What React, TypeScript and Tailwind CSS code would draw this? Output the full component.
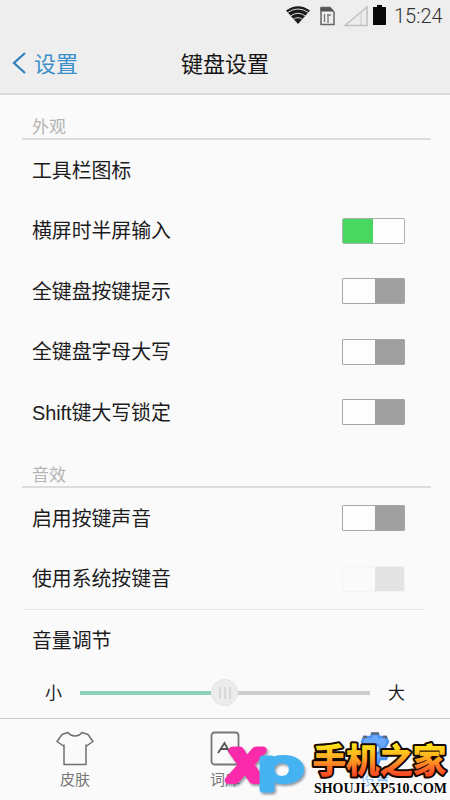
import React from "react";

const cjk = "font-['Liberation_Sans','Noto_Sans_CJK_SC',sans-serif]";

function Toggle({ state }: { state: "on" | "off" | "disabled" }) {
  if (state === "on") {
    return (
      <div className="flex h-[26px] w-[63px] rounded-[2px] border border-[#a9b3ab] bg-[#fdfdfd]">
        <div className="h-full w-[30px] bg-[#48d85f]" />
      </div>
    );
  }
  if (state === "off") {
    return (
      <div className="flex h-[26px] w-[63px] justify-end rounded-[1px] border border-[#a6a6a6] bg-[#fdfdfd]">
        <div className="h-full w-[29px] bg-[#a0a0a0]" />
      </div>
    );
  }
  return (
    <div className="flex h-[26px] w-[63px] justify-end border border-[#f3f3f3] bg-[#fafafa]">
      <div className="h-full w-[29px] bg-[#e4e4e4]" />
    </div>
  );
}

function Row({ label, state }: { label: string; state?: "on" | "off" | "disabled" }) {
  return (
    <div className="flex h-[60.5px] items-center justify-between pr-[45px] pl-8">
      <span className="pt-[3px] text-[19.9px] leading-none tracking-[-0.05px] text-[#1c1c1c]">{label}</span>
      {state && <Toggle state={state} />}
    </div>
  );
}

function Section({ label }: { label: string }) {
  return (
    <div className="ml-[22px] mr-[19px] flex items-end border-b-2 border-[#dcdcdc] pl-[10px] pb-px">
      <span className="text-[17px] leading-[18px] text-[#b4b4b4]">{label}</span>
    </div>
  );
}

function StatusBar() {
  return (
    <div className="flex h-8 justify-end pr-[7px]">
      <svg width="105" height="32" viewBox="285 0 105 32">
        <path d="M286 10.500Q298 2 310 10.500L298 24Z" fill="#1b1b1b" />
        <path d="M287.500 12.500Q298 5.500 308.500 12.500M290.500 16Q298 10.500 305.500 16M293.500 19.300Q298 16 302.500 19.300" fill="none" stroke="#eee" strokeWidth="0.900" />
        <path d="M321 7.500H330L334 12V24.500H321Z" fill="#eee" stroke="#666" strokeWidth="1.500" />
        <path d="M321 8H330L333 11H321Z" fill="#555" stroke="#555" />
        <path d="M324.500 14V22M327 15H331M328 15V23" fill="none" stroke="#777" strokeWidth="1.300" />
        <path d="M345 25.500L367 7V25.500Z" fill="#ececec" stroke="#c0c0c0" strokeWidth="1.500" />
        <path d="M361 12V25" stroke="#cacaca" />
        <path d="M377 5H382V7H386V25H373V7H377Z" fill="#080808" />
      </svg>
      <span className="ml-[4px] w-[49px] pt-[6px] font-['Roboto',sans-serif] text-[20px] leading-5 font-light text-[#333]">15:24</span>
    </div>
  );
}

function Watermark() {
  return (
    <svg className="absolute top-0 left-0 h-[82px] w-[450px]" viewBox="0 718 450 82">
      <defs>
        <linearGradient id="fire" x1="0" y1="0" x2="0" y2="1">
          <stop offset="0.15" stopColor="#fff21a" />
          <stop offset="0.48" stopColor="#ffac20" />
          <stop offset="0.72" stopColor="#ff6528" />
          <stop offset="0.95" stopColor="#f0301a" />
        </linearGradient>
        <filter id="shade" x="-20%" y="-20%" width="150%" height="150%">
          <feDropShadow dx="1.500" dy="2" stdDeviation="1.200" floodColor="#456" floodOpacity="0.6" />
        </filter>
      </defs>
      <g filter="url(#shade)" fontFamily="Liberation Sans, sans-serif">
        <text transform="translate(228.500 779) skewX(-6)" fontSize="56" textLength="32" lengthAdjust="spacingAndGlyphs" fill="#fb2caa" stroke="#fb2caa" strokeWidth="8" strokeLinejoin="round">x</text>
        <text transform="translate(257 780) scale(1 .8)" fontSize="54" textLength="47" lengthAdjust="spacingAndGlyphs" fill="#45b3f2" stroke="#45b3f2" strokeWidth="6" strokeLinejoin="round" fontFamily="DejaVu Sans, sans-serif">p</text>
      </g>
      <text x="312.500" y="772" fontFamily="Noto Sans CJK SC, sans-serif" fontSize="34" fontWeight="900" textLength="134" fill="url(#fire)" stroke="#140800" strokeWidth="4" strokeLinejoin="round" paintOrder="stroke">手机之家</text>
      <text x="314" y="792" fontFamily="Liberation Serif, serif" fontSize="14" fontWeight="700" textLength="133" lengthAdjust="spacingAndGlyphs" fill="#080808" stroke="#fff" strokeWidth="2" paintOrder="stroke">SHOUJLXP510.COM</text>
    </svg>
  );
}

function TabBar() {
  return (
    <nav className="relative h-[82px] border-t border-[#cfcfcf] bg-[#fafafa]">
      <div className="grid h-full grid-cols-3 text-[15px] leading-none text-[#777]">
        <div className="flex flex-col items-center pt-[12px]">
          <svg width="38" height="36" viewBox="0 0 38 36" fill="none" stroke="#707070" strokeWidth="1.500" strokeLinejoin="round">
            <path d="M12 1.500C15 6 23 6 26 1.500L32 3.500L37 10.500L30.500 15L30 14V33.500H8V14L7.500 15L1 10.500L6 3.500Z" />
          </svg>
          <span className="mt-[5px]">皮肤</span>
        </div>
        <div className="flex flex-col items-center pt-[12px]">
          <svg width="30" height="36" viewBox="0 0 30 36" fill="none" stroke="#777" strokeWidth="1.800">
            <rect x="1.500" y="1.500" width="27" height="32" rx="3" />
            <path d="M8 22L14.500 12L20 22M11 18H18" stroke="#555" />
          </svg>
          <span className="mt-[5px]">词库</span>
        </div>
        <div className="flex flex-col items-center pt-[12px] text-[#8fc0fa]">
          <svg width="36" height="36" viewBox="0 0 36 36" fill="none" stroke="#4f8fee" strokeWidth="2.500">
            <path d="M15 3H21L22 6H29L31 11L27 18L31 24L29 28H23L21 33H15L13 28H7L5 24L9 18L5 11L7 6H14Z" fill="#69a8fb" />
            <circle cx="18" cy="18" r="5" fill="#fafafa" />
            <path d="M14 2.500H22M6 6H10M26 6H30" stroke="#5b6879" />
          </svg>
          <span className="mt-[5px]">设置</span>
        </div>
      </div>
      <Watermark />
    </nav>
  );
}

export default function App() {
  return (
    <div className={`flex h-[800px] w-[450px] flex-col overflow-hidden bg-[#fafafa] ${cjk}`}>
      <header className="h-[95px] shrink-0 border-b-2 border-[#d8d8d8] bg-[#eee]">
        <StatusBar />
        <div className="grid h-[62px] grid-cols-3 items-center">
          <div className="flex items-center pl-[12px] text-[#3b8fcb]">
            <svg width="15" height="24" viewBox="0 0 15 24" fill="none" stroke="#2f80bd" strokeWidth="2.200">
              <path d="M13 2L2 12L13 22" />
            </svg>
            <span className="ml-[7px] pt-[3px] text-[22px] leading-none">设置</span>
          </div>
          <h1 className="pt-[3px] text-center text-[22px] leading-none text-[#151515]">键盘设置</h1>
        </div>
      </header>
      <main className="h-[623px] shrink-0">
        <div className="pt-[24px]">
          <Section label="外观" />
        </div>
        <Row label="工具栏图标" />
        <Row label="横屏时半屏输入" state="on" />
        <Row label="全键盘按键提示" state="off" />
        <Row label="全键盘字母大写" state="off" />
        <Row label="Shift键大写锁定" state="off" />
        <div className="pt-[24.500px]">
          <Section label="音效" />
        </div>
        <Row label="启用按键声音" state="off" />
        <Row label="使用系统按键音" state="disabled" />
        <div className="mr-[26px] ml-6 h-px bg-[#e6e6e6]" />
        <Row label="音量调节" />
        <div className="flex h-[44px] items-center pl-[45px] text-[17px] leading-none text-[#1c1c1c]">
          <span className="w-[35px] pt-px">小</span>
          <div className="flex w-[290px] items-center">
            <div className="h-1 w-[131px] bg-[#8bd0b9]" />
            <div className="flex h-[27px] w-[27px] items-center justify-center gap-[3px] rounded-full border border-[#e3e3e3] bg-[#ececec]">
              <i className="h-3 w-[2px] bg-[#d8d8d8]" />
              <i className="h-3 w-[2px] bg-[#d8d8d8]" />
              <i className="h-3 w-[2px] bg-[#d8d8d8]" />
            </div>
            <div className="h-1 flex-1 bg-[#cecece]" />
          </div>
          <span className="ml-[18px] pt-px">大</span>
        </div>
      </main>
      <TabBar />
    </div>
  );
}
